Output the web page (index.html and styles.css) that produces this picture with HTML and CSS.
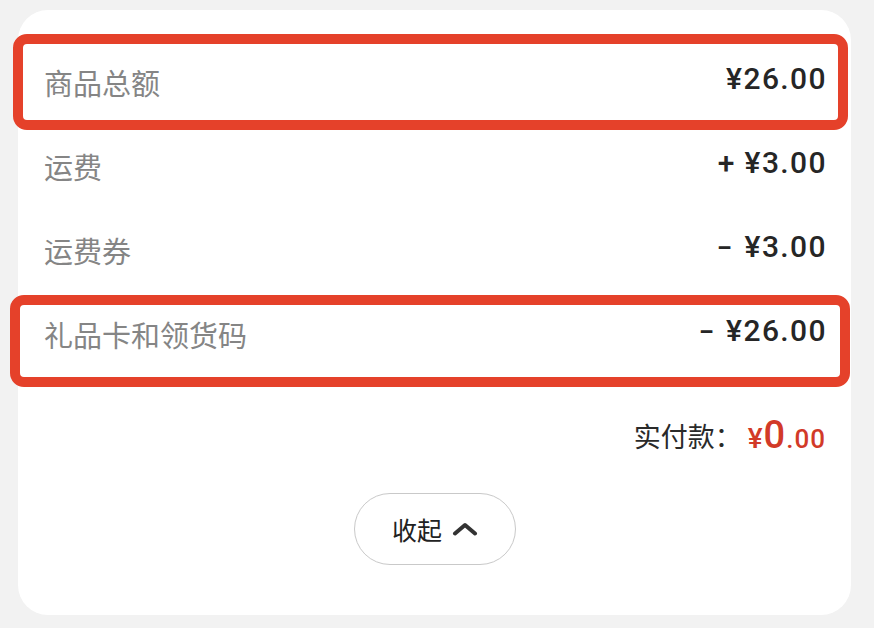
FILE: index.html
```html
<!DOCTYPE html>
<html lang="zh">
<head>
<meta charset="utf-8">
<link rel="stylesheet" href="styles.css">
</head>
<body>
<div class="card">
  <div class="row">
    <span class="label">商品总额</span><span class="value">¥26.00</span>
    <div class="mark mark-1"></div>
  </div>
  <div class="row">
    <span class="label">运费</span><span class="value">+ ¥3.00</span>
  </div>
  <div class="row">
    <span class="label">运费券</span><span class="value"><span class="minus">-</span> ¥3.00</span>
  </div>
  <div class="row">
    <span class="label">礼品卡和领货码</span><span class="value"><span class="minus">-</span> ¥26.00</span>
    <div class="mark mark-2"></div>
  </div>
  <div class="pay">
    <span class="pay-label">实付款：</span><span class="pay-amount"><span class="yen">¥</span><span class="int">0</span><span class="dec">.00</span></span>
  </div>
  <div class="actions">
    <button class="collapse">收起<svg class="chev" width="26" height="14" viewBox="0 0 26 14"><path d="M3 11.5 L13 3 L23 11.5" fill="none" stroke="#333" stroke-width="4" stroke-linecap="round" stroke-linejoin="round"/></svg></button>
  </div>
</div>
</body>
</html>
```
FILE: styles.css
```css
html, body {
  margin: 0;
  padding: 0;
  background: #f2f2f2;
  font-family: "Noto Sans CJK SC", "Noto Sans", sans-serif;
}
.card {
  margin: 10px 23px 0 18px;
  height: 605px;
  box-sizing: border-box;
  background: #fff;
  border-radius: 30px;
  padding-top: 30px;
}
.row {
  position: relative;
  height: 84px;
  padding: 0 25px 0 26px;
  display: flex;
  align-items: center;
  justify-content: space-between;
}
.label {
  font-size: 29px;
  color: #858585;
  line-height: 1;
}
.value {
  font-family: Roboto, "Noto Sans", sans-serif;
  font-size: 30px;
  font-weight: 500;
  letter-spacing: 1.4px;
  color: #262626;
  line-height: 1;
  margin-top: -6px;
  margin-right: -1px;
}
.minus {
  display: inline-block;
  transform: scaleX(1.5);
  margin-right: 4px;
}
.mark {
  position: absolute;
  border: 10px solid #e5412a;
  border-radius: 14px;
  box-sizing: border-box;
  pointer-events: none;
}
.mark-1 { left: -5px; right: 3px; top: -6px; bottom: -6px; }
.mark-2 { left: -8px; right: 1px; top: 3px; bottom: -11px; }
.pay {
  margin-top: 17px;
  height: 84px;
  padding: 0 25px;
  display: flex;
  justify-content: flex-end;
  align-items: center;
}
.pay-label {
  font-size: 27px;
  color: #2a2a2a;
  line-height: 1;
}
.pay-amount {
  font-family: Roboto, "Noto Sans", sans-serif;
  color: #d23a28;
  font-weight: 500;
  line-height: 1;
  margin-left: 6px;
  letter-spacing: 1px;
}
.yen { font-size: 28px; }
.int { font-size: 38px; }
.dec { font-size: 26px; }
.actions {
  margin-top: 16px;
  display: flex;
  justify-content: center;
  padding-left: 1px;
}
.collapse {
  width: 162px;
  height: 72px;
  border: 1px solid #c9c9c9;
  border-radius: 36px;
  background: #fff;
  font-family: "Noto Sans CJK SC", sans-serif;
  font-size: 25px;
  color: #222;
  display: flex;
  align-items: center;
  justify-content: center;
  gap: 10px;
  padding: 0;
}
.chev { display: block; }
```
